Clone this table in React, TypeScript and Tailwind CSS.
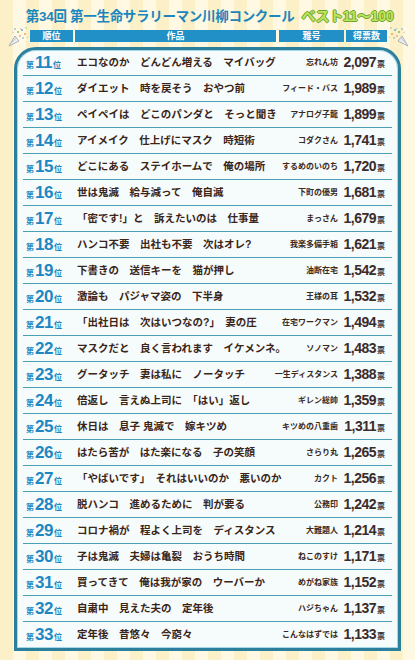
import { memo } from 'react';

type Entry = { rank: number; work: string; name: string; votes: string };

const entries: Entry[] = [
  { rank: 11, work: 'エコなのか　どんどん増える　マイバッグ', name: '忘れん坊', votes: '2,097' },
  { rank: 12, work: 'ダイエット　時を戻そう　おやつ前', name: 'フィード・バス', votes: '1,989' },
  { rank: 13, work: 'ペイペイは　どこのパンダと　そっと聞き', name: 'アナログ子龍', votes: '1,899' },
  { rank: 14, work: 'アイメイク　仕上げにマスク　時短術', name: 'コダクさん', votes: '1,741' },
  { rank: 15, work: 'どこにある　ステイホームで　俺の場所', name: 'するめのいのち', votes: '1,720' },
  { rank: 16, work: '世は鬼滅　給与減って　俺自滅', name: '下町の優男', votes: '1,681' },
  { rank: 17, work: '「密です!」と　訴えたいのは　仕事量', name: 'まっさん', votes: '1,679' },
  { rank: 18, work: 'ハンコ不要　出社も不要　次はオレ?', name: '我楽多備手箱', votes: '1,621' },
  { rank: 19, work: '下書きの　送信キーを　猫が押し', name: '油断在宅', votes: '1,542' },
  { rank: 20, work: '激論も　パジャマ姿の　下半身', name: '王様の耳', votes: '1,532' },
  { rank: 21, work: '「出社日は　次はいつなの?」　妻の圧', name: '在宅ワークマン', votes: '1,494' },
  { rank: 22, work: 'マスクだと　良く言われます　イケメンネ。', name: 'ソノマン', votes: '1,483' },
  { rank: 23, work: 'グータッチ　妻は私に　ノータッチ', name: '一生ディスタンス', votes: '1,388' },
  { rank: 24, work: '倍返し　言えぬ上司に　「はい」返し', name: 'ギレン総帥', votes: '1,359' },
  { rank: 25, work: '休日は　息子 鬼滅で　嫁キツめ', name: 'キツめの八重歯', votes: '1,311' },
  { rank: 26, work: 'はたら苦が　はた楽になる　子の笑顔', name: 'さらり丸', votes: '1,265' },
  { rank: 27, work: '「やばいです」　それはいいのか　悪いのか', name: 'カクト', votes: '1,256' },
  { rank: 28, work: '脱ハンコ　進めるために　判が要る', name: '公務印', votes: '1,242' },
  { rank: 29, work: 'コロナ禍が　程よく上司を　ディスタンス', name: '大難題人', votes: '1,214' },
  { rank: 30, work: '子は鬼滅　夫婦は亀裂　おうち時間', name: 'ねこのすけ', votes: '1,171' },
  { rank: 31, work: '買ってきて　俺は我が家の　ウーバーか', name: 'めがね家族', votes: '1,152' },
  { rank: 32, work: '自粛中　見えた夫の　定年後', name: 'ハジちゃん', votes: '1,137' },
  { rank: 33, work: '定年後　昔悠々　今窮々', name: 'こんなはずでは', votes: '1,133' },
];

const Popper = ({ flip = false }: { flip?: boolean }) => (
  <svg width="24" height="22" viewBox="0 0 24 22" className={flip ? '-scale-x-100' : ''}>
    <path d="M3 20 L9 10 L13 15 Z" fill="#e9ecef" stroke="#9aa5ad" strokeWidth="0.8" />
    <path d="M5 17 L10 12" stroke="#b8c2c8" strokeWidth="0.8" />
    <circle cx="12" cy="6" r="1" fill="#7fbf5a" />
    <circle cx="16" cy="4" r="0.9" fill="#5aa6d8" />
    <circle cx="19" cy="8" r="1" fill="#f2a33a" />
    <circle cx="14" cy="10" r="0.8" fill="#e56b8a" />
    <circle cx="9" cy="3" r="0.8" fill="#5aa6d8" />
    <circle cx="20" cy="2" r="0.7" fill="#7fbf5a" />
    <circle cx="17" cy="12" r="0.8" fill="#5aa6d8" />
    <path d="M14 2 l1 1.5 M6 6 l1.5 0.5 M21 11 l1 1" stroke="#9aa5ad" strokeWidth="0.7" />
  </svg>
);

const Row = ({ e, last }: { e: Entry; last: boolean }) => (
  <div
    className={
      'mx-[6px] flex h-[26px] items-center ' + (last ? '' : 'border-b-[1.5px] border-[#4c9db6]')
    }
  >
    <div className="flex w-[54px] items-baseline pl-[3px] text-[#1e87c2]">
      <span className="text-[8px] font-bold">第</span>
      <span className="mx-[1px] text-[17px] leading-none font-bold tracking-[-0.5px]">{e.rank}</span>
      <span className="text-[8px] font-bold">位</span>
    </div>
    <div className="min-w-0 flex-1 truncate text-[10.5px] font-bold text-[#3a2518]">{e.work}</div>
    <div className="mr-[3px] text-[8px] font-bold text-[#3a2a22]">{e.name}</div>
    <div className="flex w-[51px] items-baseline justify-end pr-[7px] text-[#3b2b2b]">
      <span className="text-[14px] leading-none font-bold tracking-[-0.5px]">{e.votes}</span>
      <span className="ml-[1px] text-[8px] font-bold">票</span>
    </div>
  </div>
);

const App = () => {
  return (
    <div className="relative h-[660px] w-[415px] overflow-hidden bg-[repeating-linear-gradient(90deg,#fcf0c9_0px,#fcf0c9_13px,#fff8e2_13px,#fff8e2_26px)] font-['Liberation_Sans','Noto_Sans_CJK_JP',sans-serif]">
      <div className="flex items-baseline justify-center pt-[6px] pl-[4px]">
        <span className="text-[13.5px] font-bold tracking-[-0.3px] text-[#1b86bd]">
          第34回 第一生命サラリーマン川柳コンクール
        </span>
        <span className="ml-[7px] text-[14px] font-bold tracking-[-0.3px] text-[#bde45f] [text-shadow:-1px_0_#6da52c,1px_0_#6da52c,0_-1px_#6da52c,0_1px_#6da52c]">
          ベスト11～100
        </span>
      </div>

      <div className="absolute top-[26px] left-[6px]">
        <Popper />
      </div>
      <div className="absolute top-[26px] right-[4px]">
        <Popper flip />
      </div>

      <div className="mt-[3px] ml-[30px] flex gap-[2px] text-[9px] font-bold text-white">
        <div className="flex h-[12px] w-[43px] items-center justify-center bg-[#2190c6]">順位</div>
        <div className="flex h-[12px] w-[201px] items-center justify-center bg-[#2190c6]">作品</div>
        <div className="ml-[1px] flex h-[12px] w-[65px] items-center justify-center bg-[#2190c6]">雅号</div>
        <div className="flex h-[12px] w-[41px] items-center justify-center bg-[#2190c6]">得票数</div>
      </div>

      <div className="mx-[14px] mt-[5px] rounded-t-[22px] border-[3px] border-[#2b819d] bg-[#f6fbfc] shadow-[inset_0_0_0_1px_#a9d6e4]">
        {entries.map((e, i) => (
          <Row key={e.rank} e={e} last={i === entries.length - 1} />
        ))}
      </div>
    </div>
  );
};

export default memo(App);
